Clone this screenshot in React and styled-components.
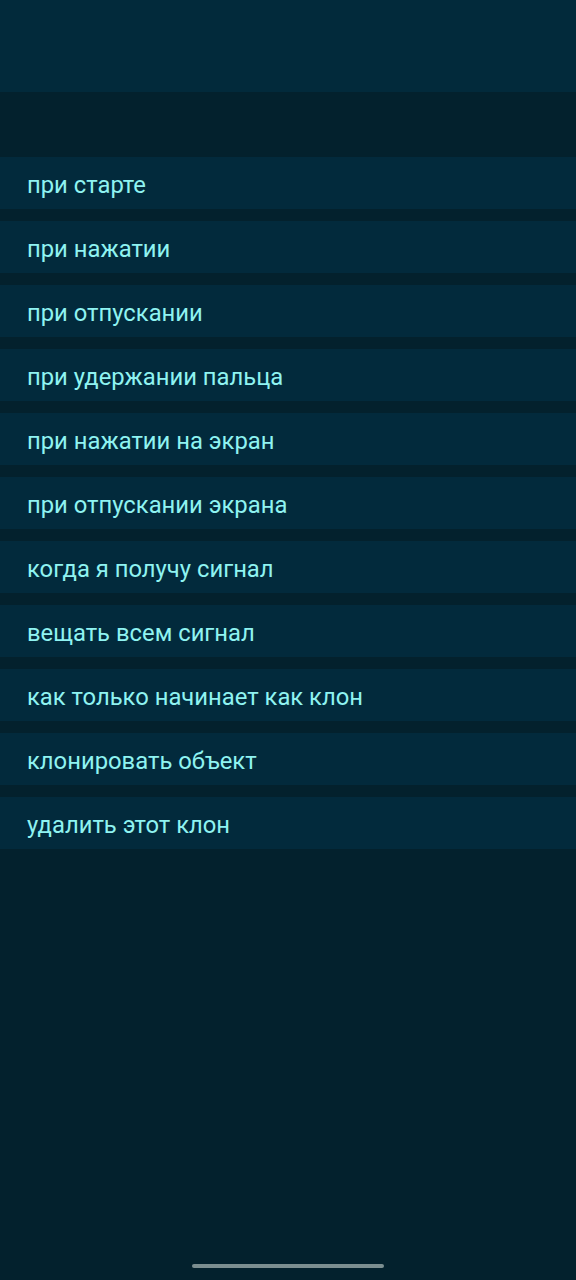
import React from "react";
import styled, { createGlobalStyle } from "styled-components";

const Global = createGlobalStyle`
  html, body { margin: 0; padding: 0; background: #03212d; }
  body { font-family: Roboto, "Noto Sans", sans-serif; }
`;

const Page = styled.div`
  min-height: 1280px;
  background: #03212d;
  display: flex;
  flex-direction: column;
  position: relative;
`;

const Header = styled.div`
  height: 92px;
  background: #022a3b;
`;

const List = styled.div`
  margin-top: 65px;
  display: flex;
  flex-direction: column;
  gap: 12px;
`;

const Row = styled.div`
  height: 52px;
  background: #022a3c;
  display: flex;
  align-items: center;
  padding-left: 27px;
  padding-top: 3px;
  box-sizing: border-box;
  color: #8ff3f1;
  font-size: 23.8px;
`;

const HomeBar = styled.div`
  position: absolute;
  left: 192px;
  top: 1264px;
  width: 192px;
  height: 4px;
  border-radius: 2px;
  background: #7b8e90;
`;

const items = [
  "при старте",
  "при нажатии",
  "при отпускании",
  "при удержании пальца",
  "при нажатии на экран",
  "при отпускании экрана",
  "когда я получу сигнал",
  "вещать всем сигнал",
  "как только начинает как клон",
  "клонировать объект",
  "удалить этот клон",
];

export default function App() {
  return (
    <Page>
      <Global />
      <Header />
      <List>
        {items.map((t) => (
          <Row key={t}>{t}</Row>
        ))}
      </List>
      <HomeBar />
    </Page>
  );
}
